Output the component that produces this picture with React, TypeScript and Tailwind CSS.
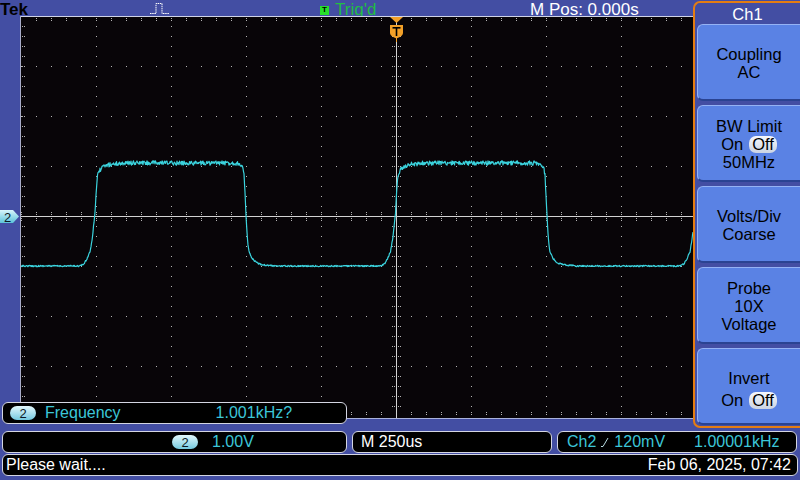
import React from 'react';

// graticule geometry, page pixels
const GX0 = 21;
const GY0 = 16;
const CX = 396;
const CY = 216;
const LOW = 266;
const HIGH = 163;

const RISE: [number, number][] = [
  [-15, 0], [-11, 0.02], [-8, 0.07], [-5, 0.14], [-3, 0.25], [-1, 0.427], [0, 0.524],
  [1, 0.689], [2, 0.835], [3, 0.893], [5, 0.932], [8, 0.961], [12, 0.98], [18, 0.99], [30, 1],
];
const FALL: [number, number][] = [
  [-12, 0], [-6, 0.01], [-4, 0.03], [-3, 0.06], [-2, 0.12], [-1, 0.3], [0, 0.5],
  [1, 0.68], [2, 0.8], [3, 0.86], [5, 0.91], [8, 0.95], [12, 0.975], [18, 0.99], [30, 1],
];

function interp(table: [number, number][], p: number) {
  if (p <= table[0][0]) return table[0][1];
  for (let i = 1; i < table.length; i++) {
    if (p <= table[i][0]) {
      const [x0, y0] = table[i - 1];
      const [x1, y1] = table[i];
      return y0 + ((y1 - y0) * (p - x0)) / (x1 - x0);
    }
  }
  return table[table.length - 1][1];
}

let seed = 12345;
const rand = () => {
  seed = (seed * 16807) % 2147483647;
  return seed / 2147483647;
};

function buildTrace() {
  const rises = [95, 395.5, 695];
  const falls = [246, 547];
  const pts: string[] = [];
  for (let x = 21; x <= 693; x += 0.5) {
    let s = 0;
    rises.forEach((r) => (s += interp(RISE, x - r)));
    falls.forEach((f) => (s -= interp(FALL, x - f)));
    const amp = 0.7 + 1.5 * s;
    const y = LOW - (LOW - HIGH) * s + (rand() - 0.5) * 2 * amp;
    pts.push(`${x.toFixed(1)},${y.toFixed(1)}`);
  }
  return pts.join(' ');
}

function buildDots() {
  let d = '';
  const dot = (x: number, y: number) => {
    d += `M${x} ${y}h1v1h-1z`;
  };
  // dotted major lines
  for (let k = 1; k < 8; k++) {
    if (k === 4) continue;
    const y = GY0 + 50 * k;
    for (let x = GX0; x < 693; x += 15) dot(x, y);
  }
  for (let i = 1; i < 9; i++) {
    if (i === 5) continue;
    const x = GX0 + 75 * i;
    for (let y = GY0 + 10; y < 416; y += 10) dot(x, y);
  }
  // ticks on the centre cross
  for (let x = GX0; x < 693; x += 15) {
    [-4, -2, 2, 4].forEach((o) => dot(x, CY + o));
  }
  for (let y = GY0 + 10; y < 416; y += 10) {
    [-4, -2, 2, 4].forEach((o) => dot(CX + o, y));
  }
  // edge ticks
  for (let x = GX0 + 15; x < 693; x += 15) {
    dot(x, 18);
    dot(x, 20);
    dot(x, 412);
    dot(x, 414);
  }
  for (let y = GY0 + 10; y < 416; y += 10) {
    dot(22, y);
    dot(24, y);
  }
  return d;
}

const TRACE = buildTrace();
const DOTS = buildDots();

function Graticule() {
  return (
    <svg width="693" height="403" viewBox="0 16 693 403" className="block">
      <defs>
        <linearGradient id="mk" x1="0" y1="0" x2="0" y2="1">
          <stop offset="0" stopColor="#d8f6fb" />
          <stop offset="1" stopColor="#5cc3da" />
        </linearGradient>
        <clipPath id="plot">
          <rect x="21" y="17" width="672" height="401" />
        </clipPath>
      </defs>
      <rect x="20" y="16" width="673" height="403" fill="#080508" />
      <rect x="20" y="16" width="673" height="1" fill="#cfd3e6" />
      <rect x="20" y="16" width="1" height="403" fill="#a9adc9" />
      <rect x="20" y="418" width="673" height="1" fill="#aab2dc" />
      <path d={DOTS} fill="#b4b4b4" />
      <rect x={CX} y="17" width="1" height="401" fill="#d2d2d2" />
      <rect x="21" y={CY} width="672" height="1" fill="#d2d2d2" />

      <polyline
        points={TRACE}
        fill="none"
        stroke="#3bd3dd"
        strokeWidth="1.2"
        strokeLinejoin="round"
        clipPath="url(#plot)"
      />

      {/* trigger position marker */}
      <polygon points="390,17 403,17 396.5,23" fill="#f2a028" />
      <path d="M390 25H403V33Q403 36 396.5 38.5Q390 36 390 33Z" fill="#f2a028" />
      <rect x="392.5" y="27" width="8" height="1.6" fill="#000" />
      <rect x="395.7" y="27" width="1.6" height="9" fill="#000" />
      <rect x="396" y="38" width="1" height="4" fill="#f2a028" />

      {/* channel 2 ground marker */}
      <polygon points="0,210 13,210 19,216.5 13,223 0,223" fill="url(#mk)" />
      <text x="4" y="221.5" fontSize="13" fontFamily="Liberation Sans, Arial, sans-serif" fill="#0b1a26">
        2
      </text>
    </svg>
  );
}

function Pill() {
  return (
    <span className="inline-flex h-[14px] w-[26px] items-center justify-center rounded-full bg-gradient-to-b from-[#e2f8fc] to-[#72c9df] text-[13px] leading-none text-[#0b1a26]">
      2
    </span>
  );
}

function Off() {
  return (
    <span className="ml-[6px] inline-flex h-[17px] items-center rounded-[7px] bg-gradient-to-b from-[#f6f8fc] to-[#cbd4e3] px-[3px] leading-none">
      Off
    </span>
  );
}

function SoftKey({ children, pad = 'pt-[2px]' }: { children: React.ReactNode; pad?: string }) {
  return (
    <div
      className={`flex h-[77px] flex-col items-center justify-center rounded-l-[6px] border-l border-t border-b-2 border-[#95b2f4] border-b-[#2a4392] bg-[#5a82e4] text-[16.5px] leading-[18px] text-black ${pad}`}
    >
      {children}
    </div>
  );
}

export default function App() {
  return (
    <div className="relative flex h-[480px] w-[800px] flex-col overflow-hidden bg-[#434ea3] font-['Liberation_Sans',Arial,sans-serif]">
      <div className="flex h-[428px]">
        <div className="flex w-[693px] flex-col">
          <div className="grid h-[16px] grid-cols-[150px_170px_210px_1fr] items-start">
            <span className="mt-[2px] text-[17px] font-bold leading-[16px] text-black">Tek</span>
            <svg width="19" height="12" viewBox="0 0 19 12" className="mt-[3px]">
              <path d="M0 10.5H6V0.5H12V10.5H19" fill="none" stroke="#fff" strokeWidth="1" strokeDasharray="1.5 0.7" />
            </svg>
            <div className="mt-[3px] flex items-center">
              <span className="flex h-[9px] w-[9px] items-center justify-center bg-[#27e02a] text-[8px] font-bold leading-none text-black">
                T
              </span>
              <span className="ml-[6px] text-[17px] leading-[14px] text-[#22bd45]">Trig'd</span>
            </div>
            <span className="mt-[2px] text-[17px] leading-[16px] text-white">M Pos: 0.000s</span>
          </div>
          <Graticule />
        </div>

        <div className="mt-[1px] flex h-[427px] w-[107px] flex-col rounded-l-[7px] border-2 border-r-0 border-[#e47d12]">
          <div className="flex h-[21px] items-center justify-center pt-[1px] text-[16.5px] text-white">Ch1</div>
          <div className="ml-[2px] flex flex-col gap-[4px]">
            <SoftKey>
              <span>Coupling</span>
              <span>AC</span>
            </SoftKey>
            <SoftKey>
              <span>BW Limit</span>
              <span className="flex items-center">
                On
                <Off />
              </span>
              <span>50MHz</span>
            </SoftKey>
            <SoftKey>
              <span>Volts/Div</span>
              <span>Coarse</span>
            </SoftKey>
            <SoftKey>
              <span>Probe</span>
              <span>10X</span>
              <span>Voltage</span>
            </SoftKey>
            <SoftKey pad="pt-[6px]">
              <span className="mb-[4px]">Invert</span>
              <span className="flex items-center">
                On
                <Off />
              </span>
            </SoftKey>
          </div>
        </div>
      </div>

      {/* measurement readout laid over the graticule */}
      <div className="absolute left-[2px] top-[402px] flex h-[22px] w-[345px] items-center rounded-[6px] border border-[#d4d6e2] bg-black pl-[7px] text-[16px] text-[#3cc6d8]">
        <Pill />
        <span className="ml-[9px]">Frequency</span>
        <span className="ml-[95px]">1.001kHz?</span>
      </div>

      <div className="mt-[3px] flex h-[22px] gap-[5px] pl-[2px] text-[16px]">
        <div className="flex w-[345px] items-center rounded-[6px] border border-[#d4d6e2] bg-black pl-[169px] text-[#3cc6d8]">
          <Pill />
          <span className="ml-[14px]">1.00V</span>
        </div>
        <div className="flex w-[200px] items-center rounded-[6px] border border-[#d4d6e2] bg-black pl-[8px] text-white">
          M 250us
        </div>
        <div className="flex w-[240px] items-center rounded-[6px] border border-[#d4d6e2] bg-black pl-[9px] text-[#3cc6d8]">
          <span>Ch2</span>
          <svg width="8" height="10" viewBox="0 0 8 10" className="ml-[5px]">
            <path d="M0 9.5H2L7 1" fill="none" stroke="#b7dbe2" strokeWidth="1" />
          </svg>
          <span className="ml-[5px]">120mV</span>
          <span className="ml-[29px]">1.00001kHz</span>
        </div>
      </div>

      <div className="mx-[2px] mt-[1px] flex h-[22px] w-[796px] items-center justify-between rounded-[6px] border border-[#d4d6e2] bg-black px-[3px] text-[16px] text-white">
        <span>Please wait....</span>
        <span className="pr-[3px]">Feb 06, 2025, 07:42</span>
      </div>
    </div>
  );
}
